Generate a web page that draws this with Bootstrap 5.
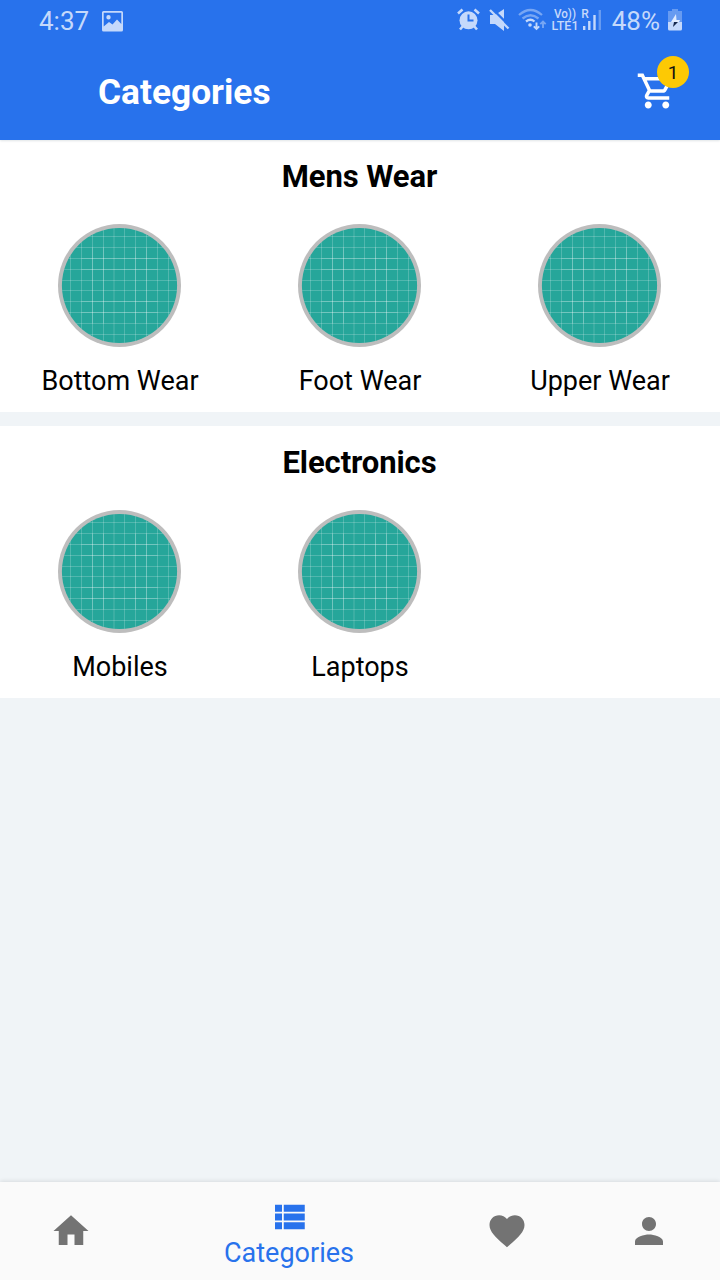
<!DOCTYPE html>
<html lang="en">
<head>
<meta charset="utf-8">
<meta name="viewport" content="width=device-width, initial-scale=1">
<title>Categories</title>
<link rel="stylesheet" href="https://cdn.jsdelivr.net/npm/bootstrap@5.3.0/dist/css/bootstrap.min.css">
<style>
body{font-family:Roboto,"Liberation Sans",sans-serif;background:#f0f4f7;color:#000}
svg{display:block;flex:none}
.screen{height:1280px;overflow:hidden}
.app-top{background:#2872ec;height:140px;color:#fff;box-shadow:0 1px 2px rgba(0,40,60,.12);z-index:1}
.status{height:42px;padding:0 38px 0 39px;color:#c5d9fb}
.status .clock,.status .level{font-size:26px;line-height:42px;white-space:nowrap}
.title-row{height:98px;padding:0 42px 0 98px}
.title-row h1{font-size:35.3px;line-height:42px;font-weight:700;padding-top:1px}
.cart-count{left:21px;top:-14px;width:32px;height:32px;border-radius:50%;background:#fdc904;color:#111;font-size:19px;line-height:33px}
.group{height:272px;background:#fff}
.group + .group{margin-top:14px}
.group h2{font-size:31px;line-height:38px;font-weight:700;padding-top:18px;padding-right:1px;height:84px;letter-spacing:-.1px}
.pic{margin-left:58px}
.name{font-size:27px;line-height:32px;margin-top:18px}
.tabs{height:98px;background:#fafafa;box-shadow:0 -1px 4px rgba(0,0,0,.1);color:#737373}
.tab{width:142px}
.tab.current{width:294px;color:#2872ec;padding-top:2px}
.tab-text{font-size:27px;line-height:31px}
</style>
</head>
<body>
<svg width="0" height="0" class="position-absolute">
  <defs>
    <clipPath id="round"><circle cx="61.5" cy="61.5" r="57.6"/></clipPath>
    <symbol id="thumb" viewBox="0 0 123 123">
      <circle cx="61.5" cy="61.5" r="61.5" fill="#bdbdbd"/>
      <circle cx="61.5" cy="61.5" r="57.6" fill="#26a69a"/>
      <g clip-path="url(#round)" stroke="#fff" fill="none">
        <path stroke-opacity=".2" d="M12.5 0V123M23.5 0V123M34.5 0V123M45.5 0V123M56 0V123M66.5 0V123M77.5 0V123M88.5 0V123M99.5 0V123M110.5 0V123M0 12.5H123M0 23.5H123M0 34.5H123M0 45.5H123M0 56.5H123M0 66.5H123M0 77.5H123M0 88.5H123M0 99.5H123M0 110.5H123"/>
        <path stroke-opacity=".2" d="M34.5 23.5V99.5M45.5 23.5V99.5M77.5 23.5V99.5M88.5 23.5V99.5M23.5 34.5H99.5M23.5 45.5H99.5M23.5 77.5H99.5M23.5 88.5H99.5"/>
      </g>
    </symbol>
  </defs>
</svg>
<div class="screen d-flex flex-column">
  <header class="app-top position-relative flex-shrink-0">
    <div class="status d-flex align-items-center">
      <span class="clock">4:37</span>
      <svg width="22" height="21" viewBox="0 0 22 21" style="margin-left:13px"><path fill="currentColor" fill-rule="evenodd" d="M1.5 0h18Q21 0 21 1.500v17.500Q21 20.500 19.500 20.500h-18Q0 20.500 0 19V1.500Q0 0 1.500 0zM1.700 1.700V15.500L7 11l3.500 2.500L15 8.500l4.300 4.500V1.700zM6.500 4a2.200 2.200 0 1 1 0 4.400a2.200 2.200 0 0 1 0-4.400z"/></svg>
      <svg class="ms-auto" width="146" height="42" viewBox="456 0 146 42" fill="none" stroke="currentColor">
        <circle cx="468.500" cy="20.300" r="9" fill="currentColor" stroke="none"/>
        <path stroke-width="2.600" d="M458 13.500l4.500-4M479 13.500l-4.500-4M463 26l-3 3.500M474 26l3 3.500"/>
        <path stroke="#2872ec" stroke-width="2" d="M468.500 14.500v6h5"/>
        <path fill="currentColor" stroke="none" d="M490 15h5l9-6v22l-9-7h-5z"/>
        <path stroke="#2872ec" stroke-width="2.400" d="M492 8.500l18 18"/>
        <path stroke-width="2.300" d="M490 10l18.500 18.500"/>
        <g stroke-width="2.300"><path opacity=".5" d="M519 15q11.500-10 23 0M522.500 18.500q8-6.500 16 0"/><path d="M526 21.500q4.500-3.500 8.500 0"/></g>
        <circle cx="530" cy="25" r="1.800" fill="currentColor" stroke="none"/>
        <path stroke-width="1.900" d="M536.500 22.500v6.500M533.800 26.300l2.700 2.700l2.700-2.700"/>
        <path opacity=".5" stroke-width="1.900" d="M543 28v-6M540.300 24.200l2.700-2.700l2.700 2.700"/>
        <g fill="currentColor" stroke="none" font-weight="500" font-size="12"><text x="554" y="18" textLength="22" lengthAdjust="spacingAndGlyphs">Vo))</text><text x="551.500" y="30" textLength="27" lengthAdjust="spacingAndGlyphs">LTE1</text><text x="581.300" y="17.500">R</text></g>
        <path stroke-width="2.400" d="M584.200 26v4M589.300 21v9M594.500 15v15"/>
        <path stroke-width="2.400" opacity=".4" d="M599.800 10v20"/>
      </svg>
      <span class="level" style="margin-left:10px">48%</span>
      <svg width="14" height="22" viewBox="0 0 14 22" style="margin-left:8px;margin-top:-2px"><path fill="currentColor" opacity=".4" d="M4 0h6v2h4v11H0V2h4z"/><path fill="currentColor" d="M0 13h14v7q0 1.500-1.500 1.500h-11Q0 21.500 0 20z"/><path fill="#e1ecff" d="M8 5L3 13h8l1-2H8.500z"/><path fill="#14264a" d="M6 13L5 18l5-5z"/></svg>
    </div>
    <div class="title-row d-flex align-items-center justify-content-between">
      <h1 class="mb-0">Categories</h1>
      <div class="position-relative">
        <svg width="42" height="42" viewBox="0 0 24 24" fill="currentColor"><path d="M15.550 13c.75 0 1.410-.41 1.750-1.030l3.580-6.490A.996.996 0 0 0 20.010 4H5.210l-.94-2H1v2h2l3.600 7.590-1.350 2.440C4.520 15.370 5.480 17 7 17h12v-2H7l1.100-2h7.450zM6.160 6h12.150l-2.760 5H8.530L6.160 6zM7 18c-1.100 0-1.990.9-1.990 2S5.900 22 7 22s2-.9 2-2-.9-2-2-2zm10 0c-1.100 0-1.990.9-1.990 2s.89 2 1.990 2 2-.9 2-2-.9-2-2-2z"/></svg>
        <span class="cart-count position-absolute text-center">1</span>
      </div>
    </div>
  </header>
  <main class="flex-grow-1">
    <section class="group">
      <h2 class="mb-0 text-center">Mens Wear</h2>
      <div class="row g-0">
        <div class="col-4"><svg class="pic" width="123" height="123"><use href="#thumb"/></svg><div class="name text-center">Bottom Wear</div></div>
        <div class="col-4"><svg class="pic" width="123" height="123"><use href="#thumb"/></svg><div class="name text-center">Foot Wear</div></div>
        <div class="col-4"><svg class="pic" width="123" height="123"><use href="#thumb"/></svg><div class="name text-center">Upper Wear</div></div>
      </div>
    </section>
    <section class="group">
      <h2 class="mb-0 text-center">Electronics</h2>
      <div class="row g-0">
        <div class="col-4"><svg class="pic" width="123" height="123"><use href="#thumb"/></svg><div class="name text-center">Mobiles</div></div>
        <div class="col-4"><svg class="pic" width="123" height="123"><use href="#thumb"/></svg><div class="name text-center">Laptops</div></div>
      </div>
    </section>
  </main>
  <nav class="tabs d-flex flex-shrink-0">
    <div class="tab d-flex flex-column align-items-center justify-content-center"><svg width="42" height="42" viewBox="0 0 24 24" fill="currentColor"><path d="M10 20v-6h4v6h5v-8h3L12 3 2 12h3v8z"/></svg></div>
    <div class="tab current d-flex flex-column align-items-center justify-content-center"><svg width="42" height="42" viewBox="0 0 24 24" fill="currentColor"><path d="M4 14h4v-4H4v4zm0 5h4v-4H4v4zM4 9h4V5H4v4zm5 5h12v-4H9v4zm0 5h12v-4H9v4zM9 5v4h12V5H9z"/></svg><span class="tab-text">Categories</span></div>
    <div class="tab d-flex flex-column align-items-center justify-content-center"><svg width="42" height="42" viewBox="0 0 24 24" fill="currentColor"><path d="M12 21.350l-1.450-1.320C5.400 15.360 2 12.280 2 8.500 2 5.420 4.420 3 7.500 3c1.740 0 3.410.81 4.500 2.090C13.090 3.810 14.760 3 16.500 3 19.580 3 22 5.420 22 8.500c0 3.780-3.400 6.860-8.550 11.540L12 21.350z"/></svg></div>
    <div class="tab d-flex flex-column align-items-center justify-content-center"><svg width="42" height="42" viewBox="0 0 24 24" fill="currentColor"><path d="M12 12c2.210 0 4-1.790 4-4s-1.790-4-4-4-4 1.790-4 4 1.790 4 4 4zm0 2c-2.670 0-8 1.340-8 4v2h16v-2c0-2.660-5.330-4-8-4z"/></svg></div>
  </nav>
</div>
<script src="https://cdn.jsdelivr.net/npm/bootstrap@5.3.0/dist/js/bootstrap.bundle.min.js"></script>
</body>
</html>
